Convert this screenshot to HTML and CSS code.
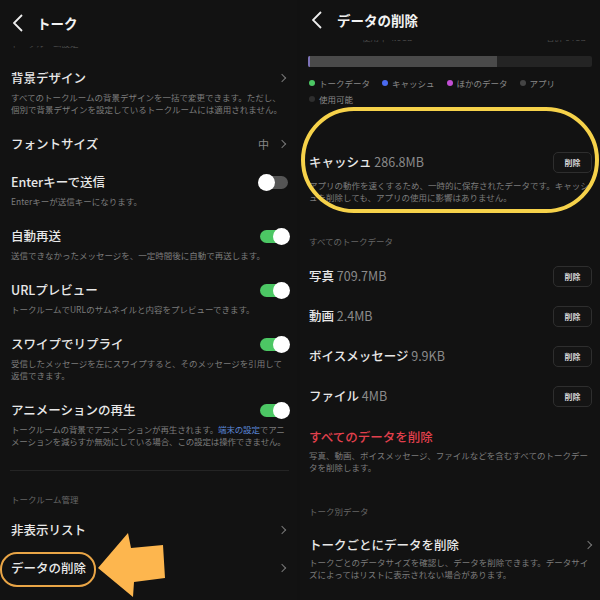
FILE: index.html
```html
<!DOCTYPE html>
<html lang="ja">
<head>
    <meta charset="UTF-8">
    <meta name="viewport" content="width=device-width, initial-scale=1.0">
    <title>トーク / データの削除</title>
    <link rel="stylesheet" href="styles.css">
</head>
<body>

<div class="screens">

    <!-- 左: トーク設定 -->
    <div class="panel left">
        <div class="header">
            <svg class="back" width="10" height="18" viewBox="0 0 10 18"><polyline points="9,1 1,9 9,17" fill="none" stroke="#eee" stroke-width="1.8"/></svg>
            <span class="title">トーク</span>
        </div>
        <div class="cut"><span>トークルーム設定</span></div>

        <div class="item first">
            <div class="row"><span class="name">背景デザイン</span><span class="chev"></span></div>
            <p class="desc">すべてのトークルームの背景デザインを一括で変更できます。ただし、個別で背景デザインを設定しているトークルームには適用されません。</p>
        </div>
        <div class="item">
            <div class="row"><span class="name">フォントサイズ</span><span class="side">中<span class="chev"></span></span></div>
        </div>
        <div class="item">
            <div class="row"><span class="name">Enterキーで送信</span><span class="toggle"></span></div>
            <p class="desc">Enterキーが送信キーになります。</p>
        </div>
        <div class="item">
            <div class="row"><span class="name">自動再送</span><span class="toggle on"></span></div>
            <p class="desc">送信できなかったメッセージを、一定時間後に自動で再送します。</p>
        </div>
        <div class="item">
            <div class="row"><span class="name">URLプレビュー</span><span class="toggle on"></span></div>
            <p class="desc">トークルームでURLのサムネイルと内容をプレビューできます。</p>
        </div>
        <div class="item">
            <div class="row"><span class="name">スワイプでリプライ</span><span class="toggle on"></span></div>
            <p class="desc">受信したメッセージを左にスワイプすると、そのメッセージを引用して返信できます。</p>
        </div>
        <div class="item">
            <div class="row"><span class="name">アニメーションの再生</span><span class="toggle on"></span></div>
            <p class="desc tight">トークルームの背景でアニメーションが再生されます。<span class="link">端末の設定</span>でアニメーションを減らすか無効にしている場合、この設定は操作できません。</p>
        </div>

        <div class="divider"></div>
        <div class="section">トークルーム管理</div>

        <div class="item menu">
            <div class="row"><span class="name">非表示リスト</span><span class="chev"></span></div>
        </div>
        <div class="item menu">
            <div class="row"><span class="name">データの削除</span><span class="chev"></span></div>
        </div>

        <!-- 注目マーク -->
        <div class="mark-box"></div>
        <svg class="arrow" width="80" height="70" viewBox="0 0 80 70">
            <polygon points="0,35 30,0 33,15 65,12 67,45 36,49 35,64" fill="#fdb64e"/>
        </svg>
    </div>

    <!-- 右: データの削除 -->
    <div class="panel right">
        <div class="header">
            <svg class="back" width="10" height="18" viewBox="0 0 10 18"><polyline points="9,1 1,9 9,17" fill="none" stroke="#eee" stroke-width="1.8"/></svg>
            <span class="title">データの削除</span>
        </div>
        <div class="cut usage"><span>使用中 4.6GB</span><span>合計 64GB</span></div>

        <div class="bar">
            <div class="bar-fill" style="width: 66%"></div>
        </div>
        <div class="legend">
            <span><i class="dot green"></i>トークデータ</span>
            <span><i class="dot blue"></i>キャッシュ</span>
            <span><i class="dot purple"></i>ほかのデータ</span>
            <span><i class="dot gray"></i>アプリ</span>
            <span><i class="dot dark"></i>使用可能</span>
        </div>

        <div class="data cache">
            <div class="row"><span class="name">キャッシュ <span class="size">286.8MB</span></span><span class="btn">削除</span></div>
            <p class="desc">アプリの動作を速くするため、一時的に保存されたデータです。キャッシュを削除しても、アプリの使用に影響はありません。</p>
        </div>

        <div class="section">すべてのトークデータ</div>
        <div class="data list">
            <div class="row"><span class="name">写真 <span class="size">709.7MB</span></span><span class="btn">削除</span></div>
        </div>
        <div class="data list">
            <div class="row"><span class="name">動画 <span class="size">2.4MB</span></span><span class="btn">削除</span></div>
        </div>
        <div class="data list">
            <div class="row"><span class="name">ボイスメッセージ <span class="size">9.9KB</span></span><span class="btn">削除</span></div>
        </div>
        <div class="data list">
            <div class="row"><span class="name">ファイル <span class="size">4MB</span></span><span class="btn">削除</span></div>
        </div>

        <div class="danger">
            <div class="name red">すべてのデータを削除</div>
            <p class="desc">写真、動画、ボイスメッセージ、ファイルなどを含むすべてのトークデータを削除します。</p>
        </div>

        <div class="section">トーク別データ</div>
        <div class="per-talk">
            <div class="row"><span class="name">トークごとにデータを削除</span><span class="chev"></span></div>
            <p class="desc">トークごとのデータサイズを確認し、データを削除できます。データサイズによってはリストに表示されない場合があります。</p>
        </div>

        <!-- 注目マーク -->
        <div class="ring"></div>
    </div>

</div>

</body>
</html>
```

FILE: styles.css
```css
body {
    margin: 0;
    padding: 0;
    background: #111111;
    font-family: "Noto Sans CJK JP", "Noto Sans", sans-serif;
    color: #e6e6e6;
    overflow: hidden;
}

.screens {
    display: flex;
    gap: 3px;
    width: 600px;
    height: 600px;
}

.panel {
    position: relative;
    height: 600px;
    background: #121212;
    overflow: hidden;
}

.panel.left {
    width: 297px;
}

.panel.right {
    width: 300px;
}

/* ヘッダー */
.header {
    display: flex;
    align-items: center;
    height: 46px;
    padding-left: 13px;
}

.header .back {
    margin-right: 14px;
}

.header .title {
    font-size: 13.5px;
    font-weight: 700;
    color: #f2f2f2;
}

.right .header {
    height: 40px;
    padding-left: 12px;
}

.right .header .back {
    margin-right: 15px;
}

/* 上で切れているテキスト */
.cut {
    height: 4px;
    overflow: hidden;
    padding-left: 11px;
    font-size: 8.5px;
    color: #4a4a4a;
}

.cut span {
    display: block;
    line-height: 12px;
    margin-top: -9px;
}

.cut.usage {
    display: flex;
    justify-content: space-between;
    padding: 0 14px 0 62px;
    height: 4px;
}

/* 設定項目 */
.item {
    padding: 10px 9px 10px 11px;
}

.item.first {
    margin-top: 9px;
}

.row {
    display: flex;
    align-items: center;
    justify-content: space-between;
}

.name {
    font-size: 12.5px;
    font-weight: 500;
    line-height: 18px;
    color: #e8e8e8;
}

.desc {
    margin: 4px 0 0 0;
    font-size: 8.5px;
    line-height: 12px;
    color: #7c7c7c;
}

.desc.tight {
    letter-spacing: -0.15px;
}

.link {
    color: #5b86d6;
}

.side {
    display: flex;
    align-items: center;
    font-size: 11px;
    color: #888;
}

.chev {
    display: inline-block;
    width: 5px;
    height: 5px;
    border-top: 1.3px solid #777;
    border-right: 1.3px solid #777;
    transform: rotate(45deg);
    margin: 0 3px 0 10px;
}

/* トグル */
.toggle {
    position: relative;
    width: 28px;
    height: 13px;
    border-radius: 7px;
    background: #555;
}

.toggle::after {
    content: "";
    position: absolute;
    left: -2px;
    top: -2px;
    width: 17px;
    height: 17px;
    border-radius: 50%;
    background: #fff;
}

.toggle.on {
    background: #4cc764;
}

.toggle.on::after {
    left: 13px;
}

.divider {
    height: 1px;
    background: #242424;
    margin: 13px 8px 0 10px;
}

.section {
    font-size: 8.5px;
    line-height: 12px;
    color: #666;
    padding-left: 11px;
    margin-top: 22px;
}

.section + .item.menu {
    margin-top: 6px;
}

/* 注目マーク(左) */
.mark-box {
    position: absolute;
    left: 0;
    top: 552px;
    width: 92px;
    height: 31px;
    border: 2px solid #e9a546;
    border-radius: 17px;
}

.arrow {
    position: absolute;
    left: 98px;
    top: 533px;
}

/* 右パネル */
.bar {
    display: flex;
    height: 11px;
    margin: 12px 8px 0 8px;
    background: #242424;
    border-radius: 2px;
    overflow: hidden;
}

.bar-fill {
    background: #4a4a4a;
    border-left: 2px solid #7e73b8;
}

.legend {
    display: flex;
    flex-wrap: wrap;
    margin: 8px 10px 0 9px;
    font-size: 8.5px;
    line-height: 16px;
    color: #888;
}

.legend span {
    display: flex;
    align-items: center;
    margin-right: 12px;
}

.dot {
    display: inline-block;
    width: 6px;
    height: 6px;
    border-radius: 50%;
    margin-right: 4px;
}

.dot.green { background: #4cc764; }
.dot.blue { background: #4a6af0; }
.dot.purple { background: #c24fd4; }
.dot.gray { background: #444; }
.dot.dark { background: #2e2e2e; }

.data {
    padding: 0 8px 0 9px;
}

.data .row {
    height: 22px;
}

.data.cache {
    margin-top: 44px;
}

.data.cache .desc {
    margin-top: 6px;
}

.data.list {
    margin-top: 18px;
}

.right .section {
    margin-top: 32px;
    padding-left: 9px;
}

.section + .data.list {
    margin-top: 18px;
}

.size {
    font-weight: 400;
    color: #8a8a8a;
}

.btn {
    display: flex;
    align-items: center;
    justify-content: center;
    width: 37px;
    height: 19px;
    border: 1px solid #2e2e2e;
    border-radius: 5px;
    background: #141414;
    font-size: 8px;
    font-weight: 700;
    color: #d6d6d6;
}

.danger {
    padding: 0 8px 0 9px;
    margin-top: 21px;
}

.name.red {
    color: #e2404d;
}

.danger .desc {
    margin-top: 3px;
}

.per-talk {
    padding: 0 7px 0 9px;
    margin-top: 19px;
}

.per-talk .desc {
    margin-top: 2px;
}

.per-talk .chev {
    margin-right: 2px;
}

/* 注目マーク(右) */
.ring {
    position: absolute;
    left: 1px;
    top: 107px;
    width: 290px;
    height: 98px;
    border: 4px solid #f6d24a;
    border-radius: 55px;
}
```
